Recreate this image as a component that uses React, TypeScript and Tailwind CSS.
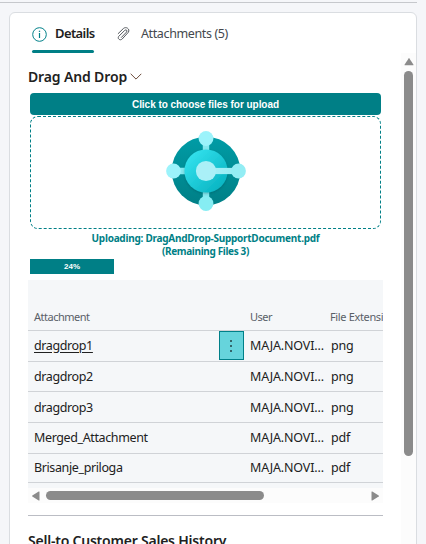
import React from "react";

type Attachment = {
    name: string;
    user: string;
    extension: string;
    height: string;
    selected?: boolean;
};

const attachments: Attachment[] = [
    { name: "dragdrop1", user: "MAJA.NOVI...", extension: "png", height: "h-[31px]", selected: true },
    { name: "dragdrop2", user: "MAJA.NOVI...", extension: "png", height: "h-[30px] pt-[2px]" },
    { name: "dragdrop3", user: "MAJA.NOVI...", extension: "png", height: "h-[31px] pt-[2px]" },
    { name: "Merged_Attachment", user: "MAJA.NOVI...", extension: "pdf", height: "h-[31px]" },
    { name: "Brisanje_priloga", user: "MAJA.NOVI...", extension: "pdf", height: "h-[29px]" },
];

const InfoIcon = () => (
    <svg className="shrink-0" width="15" height="15" viewBox="0 0 15 15" fill="none" stroke="#008089">
        <circle cx="7.5" cy="7.5" r="6.8" strokeWidth="1" />
        <path d="M7.5 6v5" strokeWidth="1.2" />
        <path d="M7.5 3.7v1.2" strokeWidth="1.3" />
    </svg>
);

const ClipIcon = () => (
    <svg className="shrink-0" width="13" height="14" viewBox="0 0 13 14" fill="none" stroke="#55595e" strokeWidth="1" strokeLinecap="round">
        <path d="M1.2 6.6 6.4 1.5c2.6-2.3 6.9.4 5 3.7L5.2 12c-2 2-5-.2-3.6-2.5L7.8 3.3c1.4-1.2 2.9.4 1.8 1.7L4.4 10.4" />
    </svg>
);

const HubLogo = () => (
    <svg width="80" height="80" viewBox="0 0 80 80">
        <defs>
            <linearGradient id="ring" x1="0" y1="0" x2="0" y2="1">
                <stop offset="0" stopColor="#009ca6" />
                <stop offset="1" stopColor="#007f86" />
            </linearGradient>
            <linearGradient id="disc" x1="0" y1="0" x2="1" y2="1">
                <stop offset="0.1" stopColor="#34e2ee" />
                <stop offset="0.9" stopColor="#08b3c1" />
            </linearGradient>
            <linearGradient id="arm" gradientUnits="userSpaceOnUse" x1="30" y1="40" x2="80" y2="40">
                <stop offset="0" stopColor="#b4f2f8" />
                <stop offset="1" stopColor="#8ceaf2" />
            </linearGradient>
            <filter id="shade" x="-20%" y="-20%" width="140%" height="140%">
                <feDropShadow dx="0" dy="1" stdDeviation="1.3" floodColor="#00454a" floodOpacity="0.35" />
            </filter>
        </defs>
        <circle cx="40" cy="40" r="34.3" fill="url(#ring)" />
        <path d="M40 7v66M7 40h34" stroke="#84e8ef" strokeWidth="6.4" />
        <circle cx="40" cy="7.5" r="7.4" fill="#9cf3fb" />
        <circle cx="7.5" cy="40" r="7.4" fill="#9cf3fb" />
        <circle cx="40" cy="72.5" r="7.4" fill="#86edf3" />
        <circle cx="40" cy="40" r="21.6" fill="url(#disc)" filter="url(#shade)" />
        <rect x="40" y="36.9" width="32" height="6.2" fill="url(#arm)" />
        <circle cx="40" cy="40" r="10.1" fill="#aaf0f7" />
        <circle cx="72.5" cy="40" r="7.4" fill="#93edf4" />
    </svg>
);

const Tabs = () => (
    <div className="flex h-10 shrink-0 pl-[22px]">
        <div className="flex w-[62px] flex-col">
            <div className="flex h-[37px] items-center pt-[5px]">
                <InfoIcon />
                <span className="ml-2 text-[13px] font-semibold tracking-[-0.6px] whitespace-nowrap">Details</span>
            </div>
            <div className="h-[3px] rounded-full bg-[#007f86]" />
        </div>
        <div className="ml-[23px] flex h-[37px] items-center pt-[5px] text-[#44484d]">
            <ClipIcon />
            <span className="ml-[11px] text-[12.5px] tracking-[-0.38px] whitespace-nowrap">Attachments (5)</span>
        </div>
    </div>
);

const UploadArea = () => (
    <div className="mx-[2px] flex w-[351px] flex-col">
        <button className="h-[22px] rounded-[4px] bg-[#007f86] font-['Liberation_Sans',sans-serif] text-[10px] font-bold tracking-[-0.04px] text-white">
            Click to choose files for upload
        </button>
        <div className="mt-px flex h-[113px] items-center justify-center rounded-lg border border-dashed border-[#007f86]">
            <div className="-mt-1"><HubLogo /></div>
        </div>
        <div className="mt-[3px] mb-px h-[26px] text-center text-[10px] leading-[13px] font-bold text-[#007f86]">
            <p className="tracking-[-0.25px]">Uploading: DragAndDrop-SupportDocument.pdf</p>
            <p className="tracking-[-0.35px]">(Remaining Files 3)</p>
        </div>
        <div className="flex h-[15px] w-[84px] items-center justify-center bg-[#007f86] font-['Liberation_Sans',sans-serif] text-[8px] font-bold text-white">
            24%
        </div>
    </div>
);

const AttachmentRow = ({ name, user, extension, height, selected }: Attachment) => (
    <div className={`flex items-center border-b border-[#d0d3d7] text-[12.5px] ${height}`}>
        <span className={`w-[191px] pl-[6px] tracking-[-0.38px] ${selected ? "underline underline-offset-2" : ""}`}>{name}</span>
        <div className="flex w-[25px] self-stretch">
            {selected && (
                <button className="flex h-[29px] w-[25px] flex-col items-center justify-center gap-[3px] border border-[#008089] bg-[#66d4dc] pr-px">
                    <i className="h-[2px] w-[2px] bg-[#33666b]" />
                    <i className="h-[2px] w-[2px] bg-[#33666b]" />
                    <i className="h-[2px] w-[2px] bg-[#33666b]" />
                </button>
            )}
        </div>
        <span className="w-[87px] pl-[6px] tracking-[-0.15px]">{user}</span>
        <span className="tracking-[-0.2px]">{extension}</span>
    </div>
);

const AttachmentTable = () => (
    <div className="mt-[6px] w-[355px] overflow-hidden bg-[#f5f7f9]">
        <div className="flex h-[51px] items-end border-b border-[#d0d3d7] pb-[5px] text-[11px] leading-4 text-[#5a6068]">
            <span className="w-[216px] shrink-0 pl-[6px] tracking-[-0.5px]">Attachment</span>
            <span className="w-[86px] shrink-0 pl-[6px] tracking-[-0.5px]">User</span>
            <span className="shrink-0 tracking-[-0.35px] whitespace-nowrap">File Extension</span>
        </div>
        {attachments.map((item) => (
            <AttachmentRow key={item.name} {...item} />
        ))}
        <div className="mt-[5px] flex h-[15px] items-center bg-[#fcfcfc] pr-1 pl-1">
            <svg width="8" height="10" viewBox="0 0 8 10" fill="#8b8b8b">
                <path d="M7.5.7v8.6q-.3.4-.8.1L.3 5.4q-.4-.4 0-.8L6.7.6q.5-.3.8.1z" />
            </svg>
            <div className="ml-[6px] h-[9px] w-[218px] rounded-full bg-[#8b8b8b]" />
            <svg className="ml-auto" width="8" height="10" viewBox="0 0 8 10" fill="#8b8b8b">
                <path d="M.5.7v8.6q.3.4.8.1l6.4-4q.4-.4 0-.8L1.3.6Q.8.3.5.7z" />
            </svg>
        </div>
    </div>
);

const FactBoxPane = () => (
    <div className="h-[544px] w-[426px] overflow-hidden bg-[#f5f6f9] pt-[2px] font-['Noto_Sans',sans-serif] text-[#212121]">
        <div className="h-px w-[417px] bg-[#c6c8cc]" />
        <div className="mt-[9px] ml-[9px] flex h-[560px] w-[408px] flex-col rounded-md border border-[#dadde1] bg-white">
            <Tabs />
            <div className="flex min-h-0 flex-1">
                <div className="w-[391px] pl-[18px]">
                    <div className="flex h-10 items-center pt-[6px]">
                        <h2 className="text-[14px] font-semibold tracking-[-0.14px] whitespace-nowrap">Drag And Drop</h2>
                        <svg className="ml-[3px]" width="12" height="7" viewBox="0 0 12 7" fill="none" stroke="#6b4a3a">
                            <path d="M.7.8 6 6.1 11.3.8" />
                        </svg>
                    </div>
                    <UploadArea />
                    <AttachmentTable />
                    <div className="mt-3 h-px w-[355px] bg-[#bbbdc4]" />
                    <h2 className="mt-[15px] text-[14px] leading-5 font-semibold tracking-[-0.22px] whitespace-nowrap">
                        Sell-to Customer Sales History
                    </h2>
                </div>
                <div className="flex flex-1 flex-col items-center bg-[#fcfcfc] pt-[5px]">
                    <svg width="10" height="8" viewBox="0 0 10 8" fill="#8b8b8b">
                        <path d="M.7 7.3h8.6q.4-.3.1-.8L5.4.5Q5 0 4.6.5l-4 6q-.3.5.1.8z" />
                    </svg>
                    <div className="mt-[5px] h-[385px] w-[9px] rounded-full bg-[#8b8b8b]" />
                </div>
            </div>
        </div>
    </div>
);

export default FactBoxPane;
